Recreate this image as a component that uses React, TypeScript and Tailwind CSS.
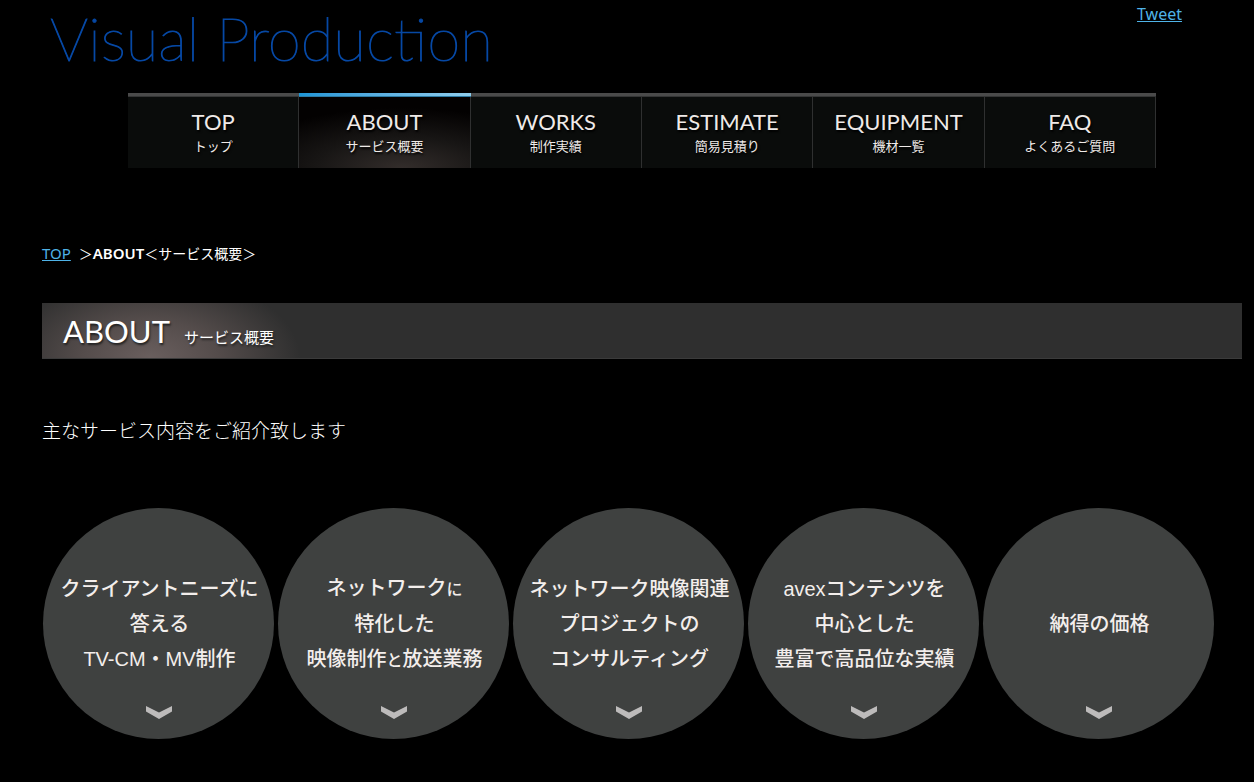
import React from 'react';

interface NavItem {
  label: string;
  sub: string;
  href: string;
  active?: boolean;
}

const navItems: NavItem[] = [
  { label: 'TOP', sub: 'トップ', href: '#top' },
  { label: 'ABOUT', sub: 'サービス概要', href: '#about', active: true },
  { label: 'WORKS', sub: '制作実績', href: '#works' },
  { label: 'ESTIMATE', sub: '簡易見積り', href: '#estimate' },
  { label: 'EQUIPMENT', sub: '機材一覧', href: '#equipment' },
  { label: 'FAQ', sub: 'よくあるご質問', href: '#faq' },
];

// Particles are set a little smaller than the words around them
const Particle: React.FC<{ children: React.ReactNode }> = ({ children }) => (
  <span className="text-[16px]">{children}</span>
);

const services: { id: string; lines: React.ReactNode[] }[] = [
  { id: 'needs', lines: ['クライアントニーズに', '答える', 'TV-CM・MV制作'] },
  {
    id: 'network',
    lines: [
      <>ネットワーク<Particle>に</Particle></>,
      '特化した',
      <>映像制作<Particle>と</Particle>放送業務</>,
    ],
  },
  { id: 'consulting', lines: ['ネットワーク映像関連', 'プロジェクトの', 'コンサルティング'] },
  { id: 'avex', lines: ['avexコンテンツを', '中心とした', '豊富で高品位な実績'] },
  { id: 'price', lines: ['納得の価格'] },
];

const GlobalNav: React.FC = () => (
  <nav className="mx-auto mt-5 w-full max-w-[1028px]">
    <ul className="grid grid-cols-6 font-['Lato','Noto_Sans_CJK_JP',sans-serif] text-[#efeae8]">
      {navItems.map((item) => (
        <li key={item.label}>
          <a
            href={item.href}
            className={`flex h-[75px] flex-col text-center ${
              item.active
                ? 'bg-[radial-gradient(ellipse_100%_80%_at_60%_100%,#332d2b_0%,#181615_50%,#030101_100%)]'
                : 'bg-[#0a0c0b]'
            }`}
          >
            <span
              className={`h-1 border-b ${
                item.active
                  ? 'border-[#2d7ca5] bg-linear-to-r from-[#1b95d6] to-[#8fcdec]'
                  : 'border-[#343535] bg-[#4a4a4a]'
              }`}
            />
            <span className="flex flex-1 flex-col border-r border-[#2f3030] pt-[11px]">
              <span className="text-[22px] leading-7 [text-shadow:1px_2px_2px_#000]">{item.label}</span>
              <span className="text-[13px] leading-5 [text-shadow:1px_2px_2px_#000]">{item.sub}</span>
            </span>
          </a>
        </li>
      ))}
    </ul>
  </nav>
);

const ServiceCircle: React.FC<{ id: string; lines: React.ReactNode[] }> = ({ id, lines }) => (
  <a
    href={`#${id}`}
    className="flex size-[231px] shrink-0 flex-col items-center rounded-full bg-[#3f4140] pt-[63px] text-[#f3eeec]"
  >
    <span className="flex h-[106px] flex-col justify-center whitespace-nowrap pl-0.5 text-center text-[20px] leading-[35px] font-medium">
      {lines.map((line, index) => (
        <span key={index}>{line}</span>
      ))}
    </span>
    <svg viewBox="0 0 26 13" className="mt-[29px] h-[13px] w-[26px]" fill="#bdbbbb" aria-hidden="true">
      <path d="M0 0 L13 6.5 L26 0 V5.5 L13 13 L0 5.5 Z" />
    </svg>
  </a>
);

const App: React.FC = () => {
  return (
    <div className="min-h-screen bg-black pr-3 pb-10 pl-[42px] font-['Noto_Sans','Noto_Sans_CJK_JP',sans-serif] text-white">
      <header>
        <div className="flex items-start justify-between pr-[60px] pl-2">
          <h1 className="pt-1 font-['Lato',sans-serif] text-[60px] leading-[69px] font-thin text-[#0648a4] [-webkit-text-stroke:1px_#0648a4]">
            Visual Production
          </h1>
          <a href="#tweet" className="pt-1 text-[16px] leading-5 text-[#4fb3e8] underline">
            Tweet
          </a>
        </div>
        <GlobalNav />
      </header>

      <main>
        <p className="mt-[75px] text-[15px] leading-5">
          <a href="#top" className="mr-1 text-[#4fb3e8] underline">TOP</a>
          {' '}
          <span className="text-[14px]">＞</span>
          <strong className="font-semibold">ABOUT</strong>
          <span className="text-[14px]">＜サービス概要＞</span>
        </p>

        <h2 className="mt-[39px] flex h-14 items-baseline gap-3.5 border-b border-[#3b3b3b] bg-[#2f2f2f] bg-[radial-gradient(ellipse_150px_85px_at_108px_100%,#6a5f5e_0%,#544c4b_45%,#2f2f2f_100%)] bg-no-repeat pl-[21px] font-['Lato','Noto_Sans_CJK_JP',sans-serif] font-normal">
          <span className="text-[31px] leading-[56px] [text-shadow:1px_2px_2px_#222]">ABOUT</span>
          <span className="text-[15px] [text-shadow:1px_2px_2px_#222]">サービス概要</span>
        </h2>

        <p className="mt-[58px] text-[19px] leading-7 font-light">主なサービス内容をご紹介致します</p>

        <div className="mt-[63px] flex gap-1 pl-px font-['Liberation_Sans','Noto_Sans_CJK_JP',sans-serif]">
          {services.map((service) => (
            <ServiceCircle key={service.id} id={service.id} lines={service.lines} />
          ))}
        </div>
      </main>
    </div>
  );
};

export default App;
